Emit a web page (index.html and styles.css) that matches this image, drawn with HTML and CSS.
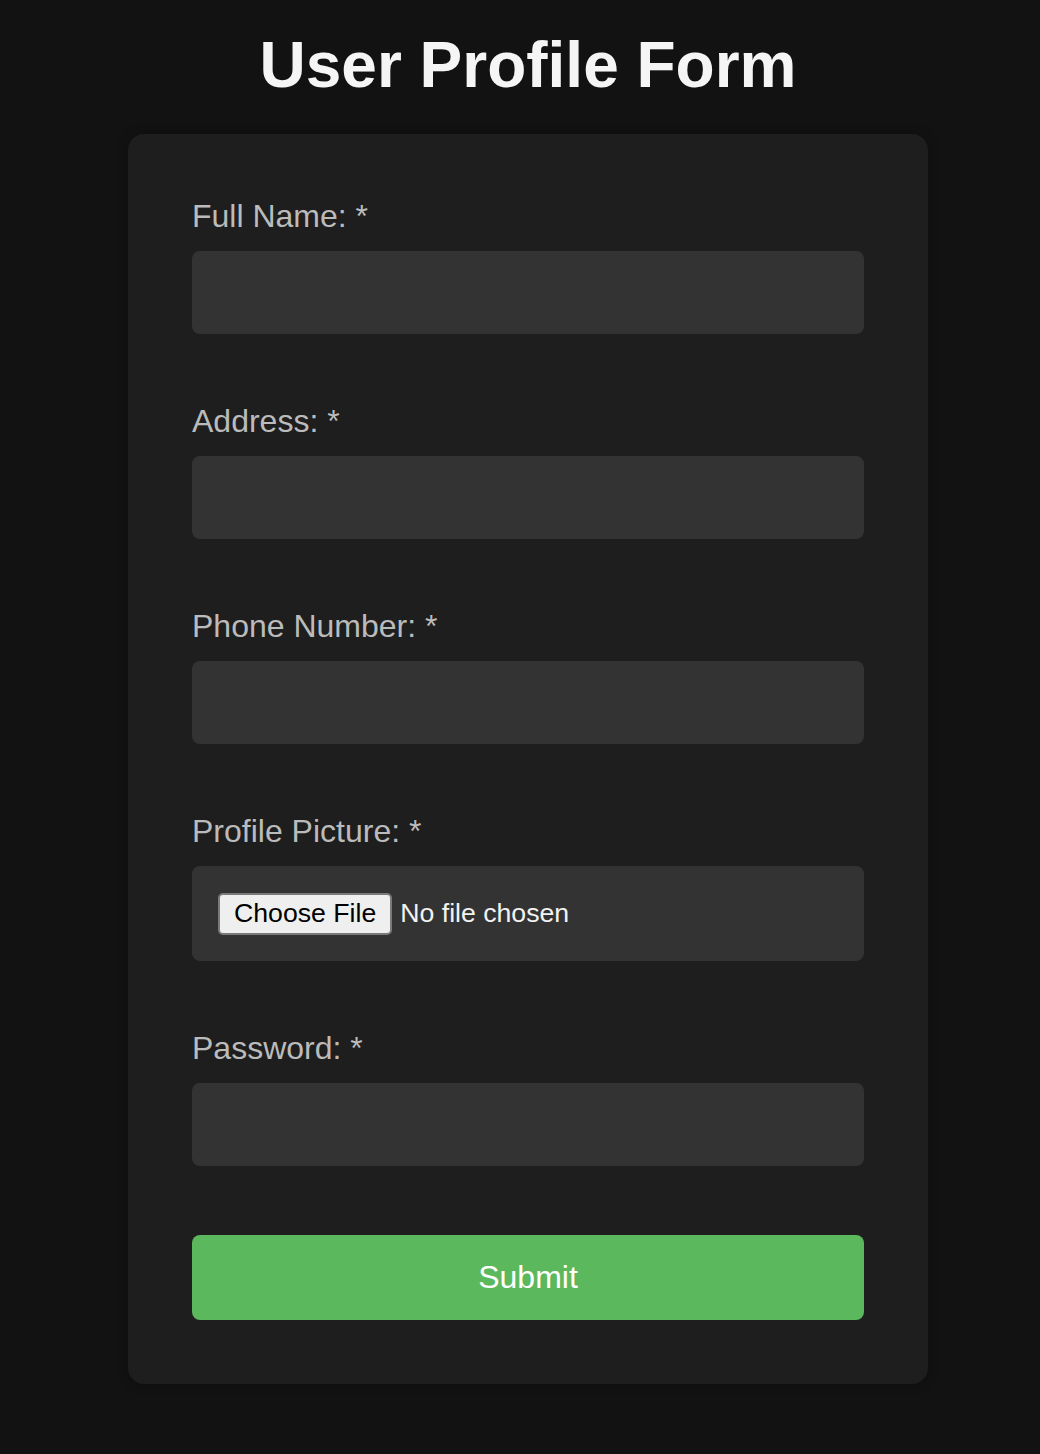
FILE: index.html
```html
<!DOCTYPE html>
<html lang="en">
<head>
<meta charset="utf-8">
<title>User Profile Form</title>
<link rel="stylesheet" href="styles.css">
</head>
<body>
<main class="page">
  <h1 class="title">User Profile Form</h1>
  <form class="card">
    <div class="field">
      <label class="label" for="name">Full Name: *</label>
      <input class="input" id="name" type="text">
    </div>
    <div class="field">
      <label class="label" for="address">Address: *</label>
      <input class="input" id="address" type="text">
    </div>
    <div class="field">
      <label class="label" for="phone">Phone Number: *</label>
      <input class="input" id="phone" type="tel">
    </div>
    <div class="field">
      <label class="label" for="picture">Profile Picture: *</label>
      <div class="file-box" id="picture">
        <button type="button" class="file-btn">Choose File</button>
        <span class="file-text">No file chosen</span>
      </div>
    </div>
    <div class="field">
      <label class="label" for="password">Password: *</label>
      <input class="input" id="password" type="password">
    </div>
    <button type="submit" class="submit">Submit</button>
  </form>
</main>
</body>
</html>
```

FILE: styles.css
```css
* {
  box-sizing: border-box;
}

html, body {
  margin: 0;
  padding: 0;
  background: #121212;
}

body {
  font-family: "Liberation Sans", Arial, sans-serif;
  color: #bbbbbb;
}

.page {
  padding: 28px 0 70px 16px;
  display: flex;
  flex-direction: column;
  align-items: center;
}

.title {
  margin: 0 0 32px;
  font-size: 64px;
  font-weight: bold;
  line-height: normal;
  color: #f5f5f5;
  text-align: center;
}

.card {
  width: 800px;
  background: #1e1e1e;
  border-radius: 16px;
  padding: 64px;
  display: flex;
  flex-direction: column;
  gap: 69px;
  box-shadow: 0 0 12px rgba(0, 0, 0, 0.25);
}

.field {
  display: flex;
  flex-direction: column;
  gap: 16px;
}

.label {
  font-size: 32px;
  line-height: normal;
  color: #bbbbbb;
}

.input {
  display: block;
  width: 100%;
  height: 83px;
  padding: 24px;
  border: 2px solid #333333;
  border-radius: 8px;
  background: #333333;
  color: #ffffff;
  font-family: "Liberation Sans", Arial, sans-serif;
  font-size: 26.67px;
  outline: none;
}

.file-box {
  display: flex;
  align-items: center;
  height: 95px;
  padding: 24px;
  border: 2px solid #333333;
  border-radius: 8px;
  background: #333333;
}

.file-btn {
  height: 42px;
  padding: 0 14px;
  margin: 0 8px 0 0;
  border: 2px solid #7a7a7a;
  border-radius: 5px;
  background: #efefef;
  color: #000000;
  font-family: "Liberation Sans", Arial, sans-serif;
  font-size: 26.67px;
  line-height: 1;
}

.file-text {
  font-size: 26.67px;
  color: #f2f2f2;
}

.submit {
  display: block;
  width: 100%;
  padding: 24px;
  border: none;
  border-radius: 8px;
  background: #5cb85c;
  color: #ffffff;
  font-family: "Liberation Sans", Arial, sans-serif;
  font-size: 32px;
  line-height: normal;
}
```
